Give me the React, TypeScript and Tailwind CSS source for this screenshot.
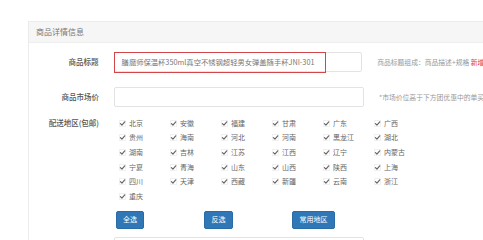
import React from "react";

const font = { fontFamily: '"Noto Sans CJK SC", "Noto Sans", sans-serif' };

const regions = [
  ["北京", "安徽", "福建", "甘肃", "广东", "广西"],
  ["贵州", "海南", "河北", "河南", "黑龙江", "湖北"],
  ["湖南", "吉林", "江苏", "江西", "辽宁", "内蒙古"],
  ["宁夏", "青海", "山东", "山西", "陕西", "上海"],
  ["四川", "天津", "西藏", "新疆", "云南", "浙江"],
  ["重庆"],
];

function Check() {
  return (
    <svg width="7" height="7" viewBox="0 0 10 10" className="shrink-0">
      <rect x="0.5" y="0.5" width="9" height="9" rx="1" fill="#fff" stroke="#e6e6e6" />
      <path d="M2 5.2 L4.2 7.4 L8.2 2.6" fill="none" stroke="#666" strokeWidth="1.7" strokeLinecap="round" strokeLinejoin="round" />
    </svg>
  );
}

export default function App() {
  return (
    <div className="w-[483px] h-[240px] overflow-hidden bg-white pt-[21px] pl-[28px]" style={font}>
      <div className="w-[470px] border-l border-t border-[#ececec]">
        <div className="h-[21px] bg-[#f6f6f7] border-b border-[#efefef] flex items-center pl-[7px] text-[8px] text-[#777]">
          商品详情信息
        </div>
        <div className="pt-[9px]">
          {/* Row 1 */}
          <div className="flex items-center h-[20px]">
            <div className="w-[70px] text-right text-[7.5px] text-[#555] font-medium">商品标题</div>
            <div className="ml-[15px] relative w-[250px] h-[20px] rounded-[2px] border border-[#e3e3e3] bg-white flex items-center">
              <div className="absolute left-[-1px] top-[-1px] w-[212px] h-[21px] border-[1.5px] border-[#d2464a]" />
              <span className="pl-[7px] text-[7.3px] text-[#777] whitespace-nowrap">膳魔师保温杯350ml真空不锈钢超轻男女弹盖随手杯JNI-301</span>
            </div>
            <div className="ml-[15px] text-[6.8px] text-[#999] whitespace-nowrap">
              商品标题组成：商品描述+规格 <span className="text-[#e0403f]">新增说明</span>
            </div>
          </div>
          {/* Row 2 */}
          <div className="flex items-center h-[20px] mt-[15px]">
            <div className="w-[70px] text-right text-[7.5px] text-[#555] font-medium">商品市场价</div>
            <div className="ml-[15px] w-[250px] h-[20px] rounded-[2px] border border-[#e3e3e3] bg-white" />
            <div className="ml-[15px] text-[6.8px] text-[#999] whitespace-nowrap">
              *市场价位高于下方团优惠中的单买价格
            </div>
          </div>
          {/* Row 3 */}
          <div className="flex mt-[9px]">
            <div className="w-[70px] text-right text-[7.5px] text-[#555] font-medium leading-[14.6px]">配送地区(包邮)</div>
            <div className="ml-[15px] w-[330px]">
              <div className="pl-[5px]">
                {regions.map((row, i) => (
                  <div key={i} className="flex h-[14.6px] items-center">
                    {row.map((r) => (
                      <div key={r} className="w-[51px] flex items-center gap-[3px] text-[7px] text-[#666] leading-none">
                        <Check />
                        <span>{r}</span>
                      </div>
                    ))}
                  </div>
                ))}
              </div>
              <div className="flex pl-[2px] mt-[7px]">
                <div className="w-[88px] flex">
                  <button className="h-[18px] w-[28px] rounded-[2px] bg-[#2f77b7] border border-[#2a6aa5] text-white text-[7px] leading-none flex items-center justify-center">全选</button>
                </div>
                <div className="w-[88px] flex">
                  <button className="h-[18px] w-[29px] rounded-[2px] bg-[#2f77b7] border border-[#2a6aa5] text-white text-[7px] leading-none flex items-center justify-center">反选</button>
                </div>
                <div className="w-[88px] flex">
                  <button className="h-[18px] w-[43px] rounded-[2px] bg-[#2f77b7] border border-[#2a6aa5] text-white text-[7px] leading-none flex items-center justify-center">常用地区</button>
                </div>
              </div>
              <div className="mt-[8px] w-[250px] h-[20px] rounded-[2px] border border-[#e3e3e3] bg-white" />
            </div>
          </div>
        </div>
      </div>
    </div>
  );
}
